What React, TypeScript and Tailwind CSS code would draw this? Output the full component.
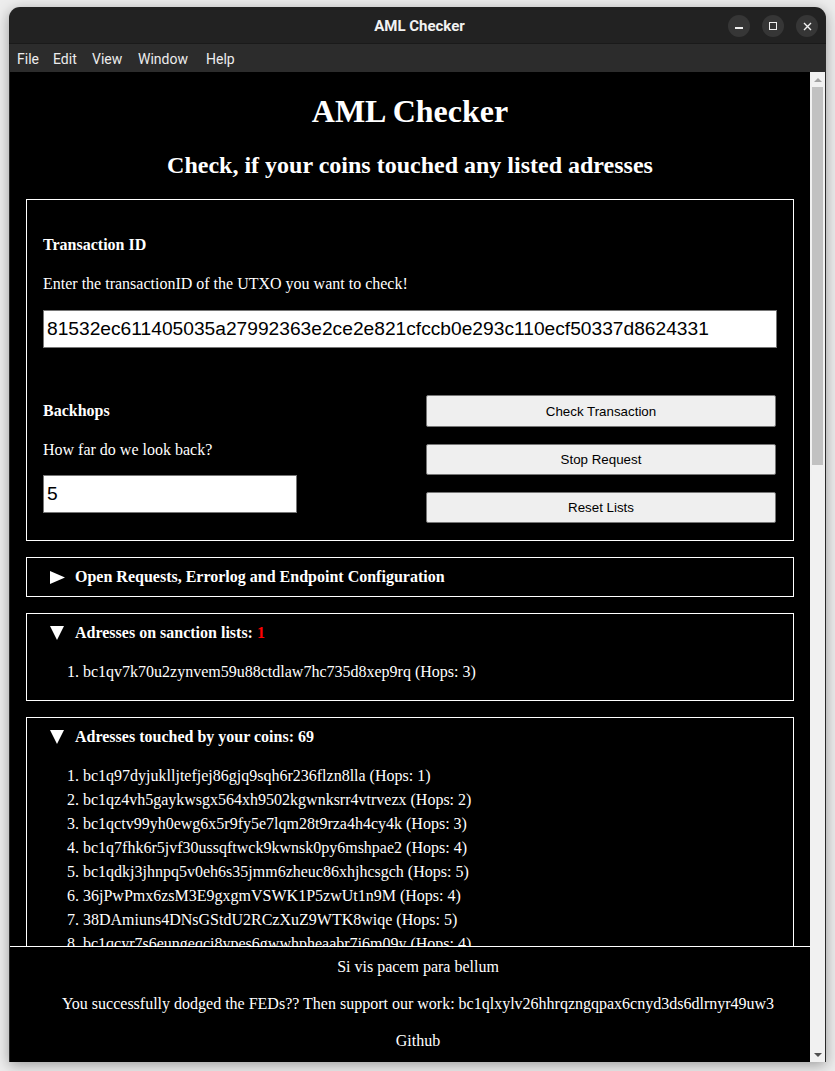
import React from "react";

const SANCTIONED = ["bc1qv7k70u2zynvem59u88ctdlaw7hc735d8xep9rq (Hops: 3)"];

const TOUCHED = [
  "bc1q97dyjuklljtefjej86gjq9sqh6r236flzn8lla (Hops: 1)",
  "bc1qz4vh5gaykwsgx564xh9502kgwnksrr4vtrvezx (Hops: 2)",
  "bc1qctv99yh0ewg6x5r9fy5e7lqm28t9rza4h4cy4k (Hops: 3)",
  "bc1q7fhk6r5jvf30ussqftwck9kwnsk0py6mshpae2 (Hops: 4)",
  "bc1qdkj3jhnpq5v0eh6s35jmm6zheuc86xhjhcsgch (Hops: 5)",
  "36jPwPmx6zsM3E9gxgmVSWK1P5zwUt1n9M (Hops: 4)",
  "38DAmiuns4DNsGStdU2RCzXuZ9WTK8wiqe (Hops: 5)",
  "bc1qcyr7s6eungeqci8ypes6gwwhpheaabr7j6m09y (Hops: 4)",
  "bc1q5shngj24323nsrmxv99st02na6srekfctt30ch (Hops: 5)",
  "3FkenCiXpSLqD8L79intRNXUgjRoH9sjXa (Hops: 5)",
];

function Arrow({ open }: { open: boolean }) {
  return open ? (
    <svg width="14" height="14" viewBox="0 0 14 14" className="block">
      <polygon points="0,0 14,0 7,14" fill="#fff" />
    </svg>
  ) : (
    <svg width="15" height="13" viewBox="0 0 15 13" className="block">
      <polygon points="0,0 15,6.5 0,13" fill="#fff" />
    </svg>
  );
}

function Summary({ open, children }: { open: boolean; children: React.ReactNode }) {
  return (
    <div className="flex items-center pl-[23px] pt-[10px] h-[18px] box-content">
      <div className="w-[25px]">
        <Arrow open={open} />
      </div>
      <span className="font-bold leading-[18px]">{children}</span>
    </div>
  );
}

function AddressList({ items }: { items: string[] }) {
  return (
    <ol className="mt-[18px] pl-[40px]">
      {items.map((item, i) => (
        <li key={item} className="leading-[24px] whitespace-nowrap">
          {i + 1}. {item}
        </li>
      ))}
    </ol>
  );
}

export default function App() {
  return (
    <div className="w-[835px] h-[1071px] bg-[#ededed] pl-[9px] pt-[7px] overflow-hidden">
      <div className="w-[817px] h-[1055px] flex flex-col rounded-t-[11px] overflow-hidden bg-[#222] shadow-[0_3px_14px_rgba(0,0,0,0.35)]">
        {/* title bar */}
        <div className="h-[37px] flex items-center relative border-b border-[#1a1a1a]">
          <div className="flex-1 text-center text-[15px] font-bold text-[#f2f2f2] font-['Roboto',sans-serif] pl-[4px] pt-[3px]">
            AML Checker
          </div>
          <div className="absolute right-[8px] top-[8px] flex gap-[12px]">
            <div className="w-[22px] h-[22px] rounded-full bg-[#363636] flex items-center justify-center">
              <div className="w-[8px] h-[1.5px] bg-[#f0f0f0] mt-[4px]" />
            </div>
            <div className="w-[22px] h-[22px] rounded-full bg-[#363636] flex items-center justify-center">
              <div className="w-[8px] h-[8px] border border-[#f0f0f0]" />
            </div>
            <div className="w-[22px] h-[22px] rounded-full bg-[#363636] flex items-center justify-center">
              <svg width="9" height="9" viewBox="0 0 9 9">
                <path d="M1 1 L8 8 M8 1 L1 8" stroke="#f0f0f0" strokeWidth="1.4" />
              </svg>
            </div>
          </div>
        </div>

        {/* menu bar */}
        <div className="h-[28px] bg-[#2c2c2c] flex items-center pl-[8px] pt-[2px] text-[14px] text-[#ececec] font-['Roboto',sans-serif]">
          <span className="w-[36px]">File</span>
          <span className="w-[39px]">Edit</span>
          <span className="w-[46px]">View</span>
          <span className="w-[68px]">Window</span>
          <span>Help</span>
        </div>

        {/* body */}
        <div className="h-[990px] flex border-x border-[#2a2a2a]">
          <div className="w-[800px] h-full flex flex-col bg-black text-white font-['Liberation_Serif',serif] text-[16px]">
            <main className="flex-1 overflow-hidden">
              <h1 className="mt-[21px] text-[32px] font-bold leading-[37px] text-center">AML Checker</h1>
              <h2 className="mt-[21px] text-[24px] font-bold leading-[28px] text-center">
                Check, if your coins touched any listed adresses
              </h2>

              <section className="ml-[16px] mt-[20px] w-[768px] border border-white px-[16px] pt-[36px] pb-[17px]">
                <h4 className="font-bold leading-[18px]">Transaction ID</h4>
                <p className="mt-[21px] leading-[18px]">Enter the transactionID of the UTXO you want to check!</p>
                <input
                  readOnly
                  value="81532ec611405035a27992363e2ce2e821cfccb0e293c110ecf50337d8624331"
                  className="mt-[17px] block w-full h-[38px] bg-white text-black border border-[#767676] px-[3px] text-[19.2px] font-['Liberation_Sans',Arial,sans-serif] outline-none"
                />
                <div className="mt-[47px] flex">
                  <div className="w-[383px] pt-[7px]">
                    <h4 className="font-bold leading-[18px]">Backhops</h4>
                    <p className="mt-[21px] leading-[18px]">How far do we look back?</p>
                    <input
                      readOnly
                      value="5"
                      className="mt-[16px] block w-[254px] h-[38px] bg-white text-black border border-[#767676] px-[3px] text-[19.2px] font-['Liberation_Sans',Arial,sans-serif] outline-none"
                    />
                  </div>
                  <div className="w-[350px] flex flex-col gap-[17px] font-['Liberation_Sans',Arial,sans-serif] text-[13.33px] text-black">
                    <button className="h-[32px] pt-[1px] bg-[#efefef] border border-[#767676] rounded-[2px]">Check Transaction</button>
                    <button className="h-[31px] bg-[#efefef] border border-[#767676] rounded-[2px]">Stop Request</button>
                    <button className="h-[31px] bg-[#efefef] border border-[#767676] rounded-[2px]">Reset Lists</button>
                  </div>
                </div>
              </section>

              <section className="ml-[16px] mt-[16px] w-[768px] border border-white pb-[10px]">
                <Summary open={false}>Open Requests, Errorlog and Endpoint Configuration</Summary>
              </section>

              <section className="ml-[16px] mt-[16px] w-[768px] border border-white pb-[16px]">
                <Summary open>
                  Adresses on sanction lists: <span className="text-[#ff0000]">1</span>
                </Summary>
                <AddressList items={SANCTIONED} />
              </section>

              <section className="ml-[16px] mt-[16px] w-[768px] border border-white pb-[16px]">
                <Summary open>Adresses touched by your coins: 69</Summary>
                <AddressList items={TOUCHED} />
              </section>
            </main>

            <footer className="h-[116px] border-t border-white pl-[16px] text-center leading-[18px]">
              <p className="mt-[11px]">Si vis pacem para bellum</p>
              <p className="mt-[19px]">
                You successfully dodged the FEDs?? Then support our work: bc1qlxylv26hhrqzngqpax6cnyd3ds6dlrnyr49uw3
              </p>
              <p className="mt-[19px]">Github</p>
            </footer>
          </div>

          {/* scrollbar */}
          <div className="w-[15px] h-full bg-[#f1f1f1] flex flex-col">
            <div className="h-[15px] flex items-center justify-center">
              <div className="w-0 h-0 border-x-[4px] border-x-transparent border-b-[4px] border-b-[#a3a3a3]" />
            </div>
            <div className="h-[378px] mx-[2px] bg-[#c1c1c1]" />
            <div className="flex-1" />
            <div className="h-[15px] flex items-center justify-center">
              <div className="w-0 h-0 border-x-[4px] border-x-transparent border-t-[4px] border-t-[#505050]" />
            </div>
          </div>
        </div>
      </div>
    </div>
  );
}
